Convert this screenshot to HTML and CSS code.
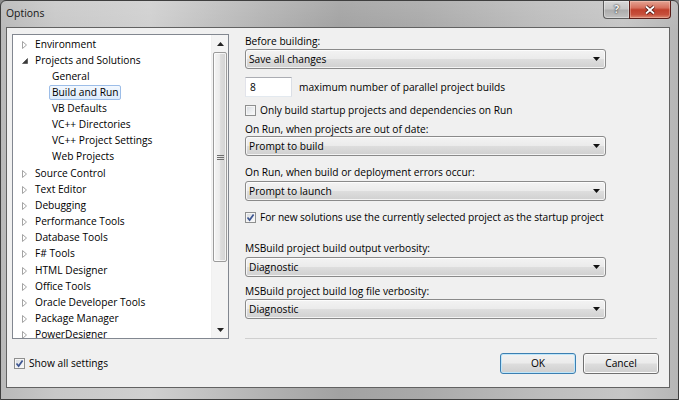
FILE: index.html
```html
<!DOCTYPE html>
<html>
<head>
<meta charset="utf-8">
<title>Options</title>
<link rel="stylesheet" href="styles.css">
</head>
<body>
<div class="window">
  <div class="titlebar">
    <span class="title">Options</span>
    <div class="caption">
      <div class="cap-help">?</div>
      <div class="cap-close">
        <svg width="12" height="10" viewBox="0 0 12 10"><path d="M2 1.5L10 8.5M10 1.5L2 8.5" stroke="#4a1410" stroke-width="3.6"/><path d="M2 1.5L10 8.5M10 1.5L2 8.5" stroke="#ffffff" stroke-width="1.8"/></svg>
      </div>
    </div>
  </div>
  <div class="client">
    <div class="main">
      <div class="tree">
        <ul class="tree-list">
          <li class="row"><span class="exp"><svg width="6" height="8" viewBox="0 0 6 8"><path d="M0.5 0.5L4.5 4L0.5 7.5Z" fill="#fff" stroke="#a3a3a3"/></svg></span>Environment</li>
          <li class="row"><span class="exp"><svg width="6" height="6" viewBox="0 0 6 6"><path d="M5.5 0.5L5.5 5.5L0.5 5.5Z" fill="#3a3a3a" stroke="#3a3a3a" stroke-width="0.6"/></svg></span>Projects and Solutions</li>
          <li class="row child"><span class="item">General</span></li>
          <li class="row child"><span class="item selected">Build and Run</span></li>
          <li class="row child"><span class="item">VB Defaults</span></li>
          <li class="row child"><span class="item">VC++ Directories</span></li>
          <li class="row child"><span class="item">VC++ Project Settings</span></li>
          <li class="row child"><span class="item">Web Projects</span></li>
          <li class="row"><span class="exp"><svg width="6" height="8" viewBox="0 0 6 8"><path d="M0.5 0.5L4.5 4L0.5 7.5Z" fill="#fff" stroke="#a3a3a3"/></svg></span>Source Control</li>
          <li class="row"><span class="exp"><svg width="6" height="8" viewBox="0 0 6 8"><path d="M0.5 0.5L4.5 4L0.5 7.5Z" fill="#fff" stroke="#a3a3a3"/></svg></span>Text Editor</li>
          <li class="row"><span class="exp"><svg width="6" height="8" viewBox="0 0 6 8"><path d="M0.5 0.5L4.5 4L0.5 7.5Z" fill="#fff" stroke="#a3a3a3"/></svg></span>Debugging</li>
          <li class="row"><span class="exp"><svg width="6" height="8" viewBox="0 0 6 8"><path d="M0.5 0.5L4.5 4L0.5 7.5Z" fill="#fff" stroke="#a3a3a3"/></svg></span>Performance Tools</li>
          <li class="row"><span class="exp"><svg width="6" height="8" viewBox="0 0 6 8"><path d="M0.5 0.5L4.5 4L0.5 7.5Z" fill="#fff" stroke="#a3a3a3"/></svg></span>Database Tools</li>
          <li class="row"><span class="exp"><svg width="6" height="8" viewBox="0 0 6 8"><path d="M0.5 0.5L4.5 4L0.5 7.5Z" fill="#fff" stroke="#a3a3a3"/></svg></span>F# Tools</li>
          <li class="row"><span class="exp"><svg width="6" height="8" viewBox="0 0 6 8"><path d="M0.5 0.5L4.5 4L0.5 7.5Z" fill="#fff" stroke="#a3a3a3"/></svg></span>HTML Designer</li>
          <li class="row"><span class="exp"><svg width="6" height="8" viewBox="0 0 6 8"><path d="M0.5 0.5L4.5 4L0.5 7.5Z" fill="#fff" stroke="#a3a3a3"/></svg></span>Office Tools</li>
          <li class="row"><span class="exp"><svg width="6" height="8" viewBox="0 0 6 8"><path d="M0.5 0.5L4.5 4L0.5 7.5Z" fill="#fff" stroke="#a3a3a3"/></svg></span>Oracle Developer Tools</li>
          <li class="row"><span class="exp"><svg width="6" height="8" viewBox="0 0 6 8"><path d="M0.5 0.5L4.5 4L0.5 7.5Z" fill="#fff" stroke="#a3a3a3"/></svg></span>Package Manager</li>
          <li class="row"><span class="exp"><svg width="6" height="8" viewBox="0 0 6 8"><path d="M0.5 0.5L4.5 4L0.5 7.5Z" fill="#fff" stroke="#a3a3a3"/></svg></span>PowerDesigner</li>
        </ul>
        <div class="vscroll">
          <div class="sb-btn"><svg width="7" height="4" viewBox="0 0 7 4"><path d="M0 4L3.5 0L7 4Z" fill="#222"/></svg></div>
          <div class="sb-track">
            <div class="sb-thumb">
              <svg class="grip" width="7" height="7" viewBox="0 0 7 7"><path d="M0 1.5H7M0 3.5H7M0 5.5H7" stroke="#6e6e6e" stroke-width="1"/></svg>
            </div>
          </div>
          <div class="sb-btn"><svg width="7" height="4" viewBox="0 0 7 4"><path d="M0 0L7 0L3.5 4Z" fill="#222"/></svg></div>
        </div>
      </div>

      <div class="panel">
        <div class="lbl">Before building:</div>
        <div class="combo"><span>Save all changes</span><svg class="arrow" width="7" height="4" viewBox="0 0 7 4"><path d="M0 0H7L3.5 4Z" fill="#111"/></svg></div>

        <div class="numrow">
          <div class="num">8</div>
          <span>maximum number of parallel project builds</span>
        </div>

        <div class="chkrow m-chk1">
          <span class="cb"></span>
          <span>Only build startup projects and dependencies on Run</span>
        </div>

        <div class="lbl m-lbl2">On Run, when projects are out of date:</div>
        <div class="combo"><span>Prompt to build</span><svg class="arrow" width="7" height="4" viewBox="0 0 7 4"><path d="M0 0H7L3.5 4Z" fill="#111"/></svg></div>

        <div class="lbl m-lbl3">On Run, when build or deployment errors occur:</div>
        <div class="combo m-combo3"><span>Prompt to launch</span><svg class="arrow" width="7" height="4" viewBox="0 0 7 4"><path d="M0 0H7L3.5 4Z" fill="#111"/></svg></div>

        <div class="chkrow m-chk2">
          <span class="cb checked"><svg width="9" height="9" viewBox="0 0 9 9"><path d="M1.5 4.5L3.6 7L7.6 1.5" fill="none" stroke="#3d5591" stroke-width="1.7"/></svg></span>
          <span class="tight">For new solutions use the currently selected project as the startup project</span>
        </div>

        <div class="lbl m-lbl4">MSBuild project build output verbosity:</div>
        <div class="combo m-combo4"><span>Diagnostic</span><svg class="arrow" width="7" height="4" viewBox="0 0 7 4"><path d="M0 0H7L3.5 4Z" fill="#111"/></svg></div>

        <div class="lbl m-lbl5">MSBuild project build log file verbosity:</div>
        <div class="combo"><span>Diagnostic</span><svg class="arrow" width="7" height="4" viewBox="0 0 7 4"><path d="M0 0H7L3.5 4Z" fill="#111"/></svg></div>

        <div class="sep"></div>
      </div>
    </div>

    <div class="footer">
      <div class="chkrow">
        <span class="cb checked"><svg width="9" height="9" viewBox="0 0 9 9"><path d="M1.5 4.5L3.6 7L7.6 1.5" fill="none" stroke="#3d5591" stroke-width="1.7"/></svg></span>
        <span>Show all settings</span>
      </div>
      <div class="buttons">
        <div class="btn default">OK</div>
        <div class="btn">Cancel</div>
      </div>
    </div>
  </div>
</div>
</body>
</html>
```

FILE: styles.css
```css
* { box-sizing: border-box; }

html, body {
  margin: 0;
  padding: 0;
}

body {
  width: 679px;
  height: 400px;
  overflow: hidden;
  background: #8c8c8c;
  font-family: "Open Sans", "Noto Sans", sans-serif;
  font-size: 10.2px;
  line-height: 15px;
  color: #000;
}

.window {
  width: 679px;
  height: 400px;
  display: flex;
  flex-direction: column;
  border: 1px solid #3f3f3f;
  border-radius: 6px 6px 0 0;
  background:
    linear-gradient(to bottom, rgba(255,255,255,0.10), rgba(0,0,0,0) 30px),
    linear-gradient(to right, #b9b9b9 0%, #c8c8c8 8%, #d0d0d0 22%, #b4b4b4 38%, #a2a2a2 50%, #a9a9a9 62%, #bdbdbd 80%, #c6c6c6 92%, #b6b6b6 100%);
}

/* title bar */
.titlebar {
  height: 26px;
  flex: none;
  display: flex;
  justify-content: space-between;
  align-items: flex-start;
  padding: 5px 7px 0 5px;
}

.title {
  color: #161616;
  font-size: 10.4px;
  line-height: 15px;
}

.caption {
  display: flex;
  margin-top: -5px;
}

.cap-help {
  width: 26px;
  height: 18px;
  border: 1px solid #5d5d5d;
  border-top: none;
  border-right: none;
  border-radius: 0 0 0 4px;
  background: linear-gradient(#d8d8d8 0%, #c6c6c6 45%, #adadad 55%, #c2c2c2 100%);
  box-shadow: inset 0 0 0 1px rgba(255,255,255,0.35);
  color: #f4f4f4;
  font-weight: bold;
  font-size: 11px;
  line-height: 16px;
  text-align: center;
  text-shadow: 0 0 2px #333, 0 0 1px #333;
}

.cap-close {
  width: 42px;
  height: 18px;
  border: 1px solid #5a1d18;
  border-top: none;
  border-radius: 0 0 4px 0;
  background: linear-gradient(#e4a493 0%, #d6715e 40%, #c0402c 52%, #c7503c 80%, #dc8a72 100%);
  box-shadow: inset 0 0 0 1px rgba(255,220,210,0.35);
  display: flex;
  align-items: center;
  justify-content: center;
}

/* client area */
.client {
  flex: 1;
  margin: 0 8px 11px 5px;
  border: 1px solid #626262;
  background: #f0f0f0;
  padding: 6px 10px 0 5px;
  display: flex;
  flex-direction: column;
}

.main {
  height: 305px;
  flex: none;
  display: flex;
  gap: 16px;
}

/* tree */
.tree {
  width: 217px;
  height: 305px;
  border: 1px solid #828790;
  background: #ffffff;
  display: flex;
  overflow: hidden;
}

.tree-list {
  flex: 1;
  margin: 0;
  padding: 1px 0 0 0;
  list-style: none;
  overflow: hidden;
}

.row {
  height: 16.12px;
  display: flex;
  align-items: center;
  white-space: nowrap;
  padding-left: 9px;
  line-height: 16px;
}

.exp {
  width: 13px;
  flex: none;
  display: flex;
  align-items: center;
  padding-top: 2px;
}

.row.child {
  padding-left: 36px;
}

.item {
  border: 1px solid transparent;
  border-radius: 2px;
  padding: 0 2px;
  line-height: 13px;
}

.item.selected {
  border-color: #9cbde8;
  background: linear-gradient(#f3f8fe, #dcebfc);
}

.vscroll {
  width: 17px;
  flex: none;
  display: flex;
  flex-direction: column;
  background: #f4f4f4;
  border-left: 1px solid #f0f0f0;
}

.sb-btn {
  height: 17px;
  flex: none;
  display: flex;
  align-items: center;
  justify-content: center;
}

.sb-track {
  flex: 1;
  display: flex;
  flex-direction: column;
}

.sb-thumb {
  height: 210px;
  margin: 0 1px 0 1px;
  border: 1px solid #9b9b9b;
  border-radius: 2px;
  background: linear-gradient(to right, #f4f4f4 0%, #ececec 45%, #dcdcdc 55%, #d3d3d3 100%);
  box-shadow: inset 0 0 0 1px rgba(255,255,255,0.7);
  display: flex;
  align-items: center;
  justify-content: center;
}

/* right panel */
.panel {
  flex: 1;
  display: flex;
  flex-direction: column;
  align-items: flex-start;
}

.lbl {
  height: 15px;
  white-space: nowrap;
}

.m-lbl2 { margin-top: 4px; }
.m-lbl3 { margin-top: 9px; }
.m-combo3 { margin-top: 1px; }
.m-chk1 { margin-top: 6px; }
.m-chk2 { margin-top: 9px; }
.m-lbl4 { margin-top: 16px; }
.m-combo4 { margin-top: 1px; }
.m-lbl5 { margin-top: 7px; }

.combo {
  width: 361px;
  height: 20px;
  flex: none;
  border: 1px solid #8a8a8a;
  border-radius: 3px;
  background: linear-gradient(#f3f3f3 0%, #ebebeb 48%, #dddddd 52%, #d0d0d0 100%);
  box-shadow: inset 0 0 0 1px rgba(255,255,255,0.75);
  display: flex;
  align-items: center;
  justify-content: space-between;
  padding: 0 5px 0 3px;
}

.m-lbl2 + .combo { margin-top: -1px; }

.arrow {
  flex: none;
}

.numrow {
  margin-top: 8px;
  height: 20px;
  display: flex;
  align-items: center;
  gap: 7px;
  white-space: nowrap;
}

.num {
  width: 47px;
  height: 20px;
  border: 1px solid;
  border-color: #abadb3 #dbdfe6 #e3e9ef #e2e3ea;
  background: #ffffff;
  padding-left: 4px;
  line-height: 18px;
}

.chkrow {
  height: 15px;
  display: flex;
  align-items: center;
  gap: 4px;
  white-space: nowrap;
}

.tight {
  letter-spacing: -0.08px;
}

.cb {
  width: 11px;
  height: 11px;
  flex: none;
  border: 1px solid #8e8f8f;
  background: linear-gradient(135deg, #d4d8dd 0%, #eceef0 55%, #fbfbfb 100%);
  box-shadow: inset 0 0 0 1px #f6f6f6;
  display: flex;
  align-items: center;
  justify-content: center;
}

.cb svg {
  display: block;
}

.sep {
  margin-top: auto;
  width: 412px;
  height: 1px;
  background: #cfcfcf;
}

/* footer */
.footer {
  flex: none;
  display: flex;
  align-items: center;
  justify-content: space-between;
  padding: 14px 0 0 2px;
}

.buttons {
  display: flex;
  gap: 7px;
}

.btn {
  width: 76px;
  height: 21px;
  border: 1px solid #707070;
  border-radius: 3px;
  background: linear-gradient(#f2f2f2 0%, #ebebeb 48%, #dddddd 52%, #cfcfcf 100%);
  box-shadow: inset 0 0 0 1px #fbfbfb;
  display: flex;
  align-items: center;
  justify-content: center;
}

.btn.default {
  border-color: #3c7fb1;
  box-shadow: inset 0 0 0 1px #bfe6fa;
}
```
